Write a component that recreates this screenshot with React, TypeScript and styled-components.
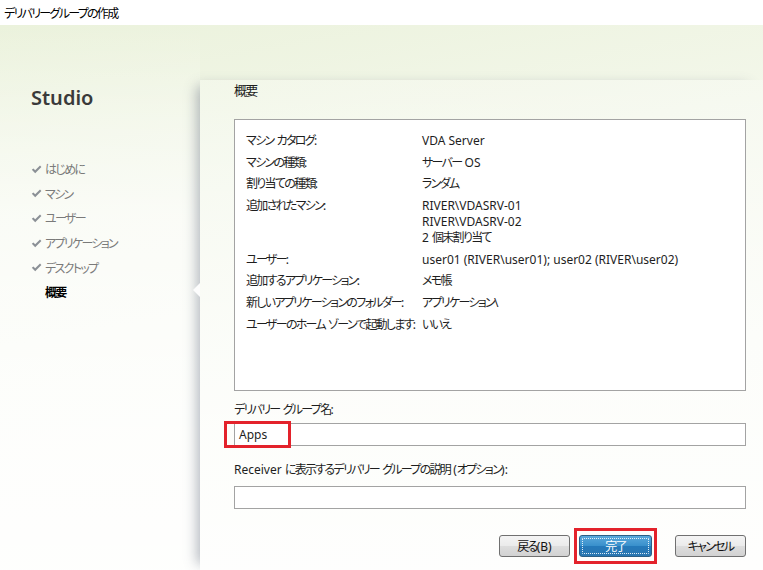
import styled, { createGlobalStyle } from "styled-components";
import { Fragment } from "react";

const GlobalStyle = createGlobalStyle`
  html, body {
    margin: 0;
    padding: 0;
  }
  body {
    width: 763px;
    height: 570px;
    overflow: hidden;
    font-family: "Noto Sans", "Noto Sans CJK JP", sans-serif;
    font-size: 12px;
    font-feature-settings: "palt";
    color: #1e1e1e;
  }
`;

// Japanese glyphs are squeezed to match the narrow UI font of the original
const Cjk = styled.span`
  letter-spacing: -1.7px;
`;

const JP_RUN = /([\u3040-\u30ff\u4e00-\u9fff\uff00-\uffef]+)/;

const T = ({ children }: { children: string }) => (
  <>
    {children.split(JP_RUN).map((part, i) =>
      JP_RUN.test(part) ? (
        <Cjk key={i}>{part}</Cjk>
      ) : (
        <Fragment key={i}>{part}</Fragment>
      )
    )}
  </>
);

const Window = styled.div`
  width: 763px;
  height: 570px;
  display: flex;
  flex-direction: column;
  background: #ffffff;
`;

const TitleBar = styled.div`
  height: 25px;
  flex: none;
  display: flex;
  align-items: center;
  padding-left: 4px;
  font-size: 12px;
  color: #000;
  background: #fff;
  white-space: pre;
`;

const Body = styled.div`
  flex: 1;
  display: flex;
  background: linear-gradient(
    170deg,
    #ebf2dc 0%,
    #f3f7ea 30%,
    #f9fbf4 65%,
    #fafcf6 100%
  );
`;

const Sidebar = styled.nav`
  width: 200px;
  flex: none;
  display: flex;
  flex-direction: column;
  padding: 61px 0 0 31px;
  box-sizing: border-box;
  background: linear-gradient(
    to bottom,
    rgba(255, 255, 255, 0) 0%,
    rgba(255, 255, 255, 0.6) 35%,
    rgba(255, 255, 255, 0.85) 100%
  );
`;

const Brand = styled.div`
  font-size: 20px;
  font-weight: 600;
  color: #3a3a3a;
  height: 24px;
  line-height: 24px;
  margin-bottom: 51px;
`;

const StepList = styled.ul`
  list-style: none;
  margin: 0;
  padding: 0;
  display: flex;
  flex-direction: column;
  gap: 8.7px;
`;

const Step = styled.li<{ $current?: boolean }>`
  display: flex;
  align-items: center;
  height: 16px;
  gap: 3px;
  color: ${({ $current }) => ($current ? "#000" : "#7a7a7a")};
  font-weight: ${({ $current }) => ($current ? 600 : 400)};
`;

const CheckSlot = styled.span`
  width: 11px;
  display: flex;
  align-items: center;
`;

const Main = styled.main`
  flex: 1;
  margin-top: 55px;
  position: relative;
  display: flex;
  flex-direction: column;
  padding: 0 17px 0 34px;
  background: linear-gradient(
    to bottom,
    rgba(255, 255, 255, 0.25) 0%,
    rgba(255, 255, 255, 0.8) 100%
  );
  box-shadow: -9px 0 12px -6px rgba(90, 100, 120, 0.45);

  &::before {
    content: "";
    position: absolute;
    left: -7px;
    top: 203px;
    border-top: 7px solid transparent;
    border-bottom: 7px solid transparent;
    border-right: 7px solid #fdfdfd;
  }
`;

const Heading = styled.h2`
  margin: 0;
  height: 39px;
  padding-top: 2px;
  box-sizing: border-box;
  font-size: 13px;
  font-weight: 400;
  line-height: 16px;
  color: #1e1e1e;
`;

const SummaryBox = styled.div`
  height: 272px;
  box-sizing: border-box;
  border: 1px solid #a3a3a3;
  background: #fff;
  padding: 13px 11px 0 11px;
`;

const SummaryGrid = styled.dl`
  margin: 0;
  display: grid;
  grid-template-columns: 176px 1fr;
  row-gap: 5.7px;
  line-height: 16px;
  font-size: 12px;
  white-space: pre;

  dt,
  dd {
    margin: 0;
  }
`;

const FieldLabel = styled.label<{ $top: number; $bottom: number }>`
  display: block;
  height: 16px;
  line-height: 16px;
  white-space: pre;
  margin: ${({ $top, $bottom }) => `${$top}px 0 ${$bottom}px`};
`;

const InputWrap = styled.div`
  position: relative;
`;

const TextBox = styled.div`
  height: 23px;
  box-sizing: border-box;
  border: 1px solid #a3a3a3;
  background: #fff;
  display: flex;
  align-items: center;
  padding-left: 4px;
`;

const Highlight = styled.span<{ $w: number; $h: number }>`
  position: absolute;
  border: 3px solid #e3222b;
  width: ${({ $w }) => $w}px;
  height: ${({ $h }) => $h}px;
  box-sizing: border-box;
  pointer-events: none;
`;

const NameHighlight = styled(Highlight)`
  left: -10px;
  top: -2px;
`;

const ButtonRow = styled.div`
  display: flex;
  justify-content: flex-end;
  align-items: center;
  margin-top: 26px;
  gap: 9px;
`;

const ButtonFrame = styled.div`
  position: relative;
  display: flex;
  margin-right: 14px;
`;

const FinishHighlight = styled(Highlight)`
  left: -5px;
  top: -7px;
`;

const Button = styled.button<{ $primary?: boolean }>`
  height: 22px;
  width: ${({ $primary }) => ($primary ? 73 : 71)}px;
  padding: 0;
  box-sizing: border-box;
  border-radius: 3px;
  font-family: inherit;
  font-size: 12px;
  font-feature-settings: "palt";
  position: relative;
  color: ${({ $primary }) => ($primary ? "#fff" : "#111")};
  border: 1px solid ${({ $primary }) => ($primary ? "#2c5f86" : "#707070")};
  background: ${({ $primary }) =>
    $primary
      ? "linear-gradient(to bottom, #5aa9dc 0%, #3a91cc 48%, #2479ba 52%, #2a76b0 100%)"
      : "linear-gradient(to bottom, #f4f4f4 0%, #ebebeb 48%, #dddddd 52%, #d2d2d2 100%)"};

  ${({ $primary }) =>
    $primary &&
    `
    &::after {
      content: "";
      position: absolute;
      inset: 2px;
      border: 1px dotted rgba(255, 255, 255, 0.85);
      border-radius: 1px;
    }
  `}
`;

const Check = () => (
  <svg width="11" height="9" viewBox="0 0 11 9">
    <path
      d="M0.8 4.8 L2.4 3.4 L4.2 5.2 L9 0.6 L10.4 1.9 L4.2 8.2 Z"
      fill="#8b9096"
    />
  </svg>
);

const steps = [
  "はじめに",
  "マシン",
  "ユーザー",
  "アプリケーション",
  "デスクトップ",
];

const summary: [string, string[]][] = [
  ["マシン カタログ:", ["VDA Server"]],
  ["マシンの種類:", ["サーバー OS"]],
  ["割り当ての種類:", ["ランダム"]],
  [
    "追加されたマシン:",
    ["RIVER\\VDASRV-01", "RIVER\\VDASRV-02", "2 個未割り当て"],
  ],
  ["ユーザー:", ["user01 (RIVER\\user01); user02 (RIVER\\user02)"]],
  ["追加するアプリケーション:", ["メモ帳"]],
  ["新しいアプリケーションのフォルダー:", ["アプリケーション\\"]],
  ["ユーザーのホーム ゾーンで起動します:", ["いいえ"]],
];

export default function App() {
  return (
    <>
      <GlobalStyle />
      <Window>
        <TitleBar>
          <T>デリバリー グループの作成</T>
        </TitleBar>
        <Body>
          <Sidebar>
            <Brand>Studio</Brand>
            <StepList>
              {steps.map((s) => (
                <Step key={s}>
                  <CheckSlot>
                    <Check />
                  </CheckSlot>
                  <T>{s}</T>
                </Step>
              ))}
              <Step $current>
                <CheckSlot />
                <T>概要</T>
              </Step>
            </StepList>
          </Sidebar>
          <Main>
            <Heading>
              <T>概要</T>
            </Heading>
            <SummaryBox>
              <SummaryGrid>
                {summary.map(([label, values]) => (
                  <Fragment key={label}>
                    <dt>
                      <T>{label}</T>
                    </dt>
                    <dd>
                      {values.map((v) => (
                        <div key={v}>
                          <T>{v}</T>
                        </div>
                      ))}
                    </dd>
                  </Fragment>
                ))}
              </SummaryGrid>
            </SummaryBox>
            <FieldLabel $top={11} $bottom={5}>
              <T>デリバリー グループ名:</T>
            </FieldLabel>
            <InputWrap>
              <TextBox>Apps</TextBox>
              <NameHighlight $w={67} $h={27} />
            </InputWrap>
            <FieldLabel $top={16} $bottom={8}>
              <T>Receiver に表示するデリバリー グループの説明 (オプション):</T>
            </FieldLabel>
            <InputWrap>
              <TextBox />
            </InputWrap>
            <ButtonRow>
              <Button>
                <T>戻る(B)</T>
              </Button>
              <ButtonFrame>
                <Button $primary>
                  <T>完了</T>
                </Button>
                <FinishHighlight $w={83} $h={36} />
              </ButtonFrame>
              <Button>
                <T>キャンセル</T>
              </Button>
            </ButtonRow>
          </Main>
        </Body>
      </Window>
    </>
  );
}
